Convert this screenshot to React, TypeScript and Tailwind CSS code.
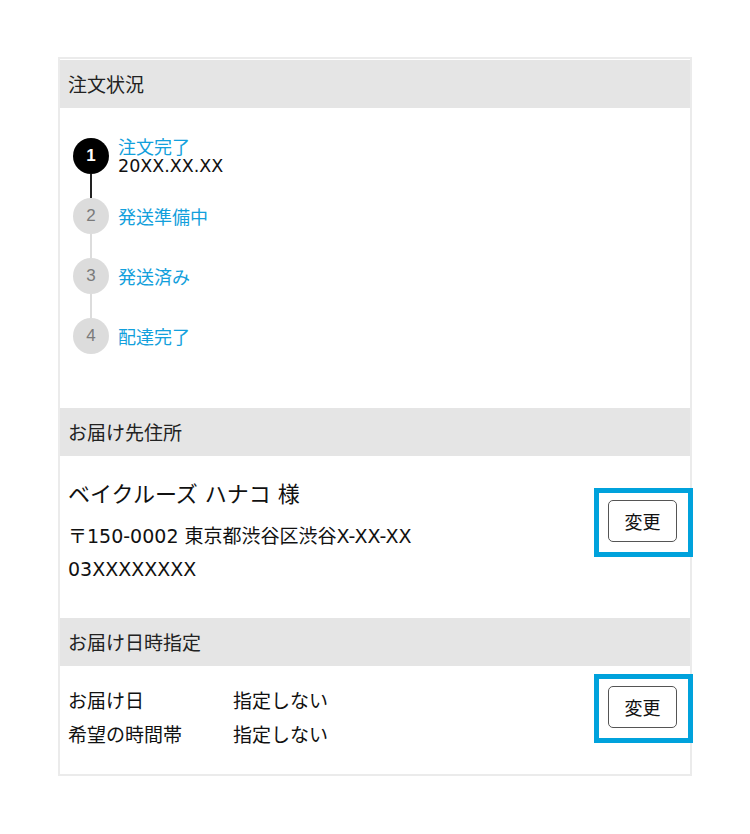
const font = { fontFamily: '"Noto Sans CJK JP", "Noto Sans", sans-serif' }
const latinFont = { fontFamily: '"DejaVu Sans", "Noto Sans CJK JP", sans-serif' }

interface Step {
    num: number
    label: string
    date?: string
    done: boolean
}

const steps: Step[] = [
    { num: 1, label: '注文完了', date: '20XX.XX.XX', done: true },
    { num: 2, label: '発送準備中', done: false },
    { num: 3, label: '発送済み', done: false },
    { num: 4, label: '配達完了', done: false },
]

function SectionHeader({ title }: { title: string }) {
    return (
        <div className="flex h-[48px] items-center bg-[#e5e5e5] pl-[8px] text-[19px] text-[#222]">
            {title}
        </div>
    )
}

function ChangeButton() {
    return (
        <div className="-mr-[3px] border-[5px] border-[#00a2dc] pt-[7px] pr-[11px] pb-[10px] pl-[9px]">
            <button className="flex h-[42px] w-[69px] items-center justify-center rounded-[5px] border-[1.5px] border-[#555] bg-white text-[18px] text-[#111]">
                変更
            </button>
        </div>
    )
}

function StepList() {
    return (
        <div className="pt-[30px] pb-[54px] pl-[13px]">
            {steps.map((step, i) => (
                <div key={step.num} className="flex items-start">
                    <div className="flex w-[36px] flex-col items-center">
                        <div
                            className={
                                step.done
                                    ? 'flex h-[36px] w-[36px] items-center justify-center rounded-full bg-black text-[17px] font-bold text-white'
                                    : 'flex h-[36px] w-[36px] items-center justify-center rounded-full bg-[#dcdcdc] text-[17px] text-[#7a7a7a]'
                            }
                            style={{ fontFamily: '"Liberation Sans", Arial, sans-serif' }}
                        >
                            {step.num}
                        </div>
                        {i < steps.length - 1 && (
                            <div
                                className={
                                    step.done
                                        ? 'h-[24px] w-[2px] bg-[#222]'
                                        : 'h-[24px] w-[2px] bg-[#dcdcdc]'
                                }
                            />
                        )}
                    </div>
                    <div className="ml-[9px] flex h-[36px] flex-col justify-center">
                        <div className="text-[18px] leading-[20px] text-[#12a0dc]">{step.label}</div>
                        {step.date && (
                            <div className="text-[17.5px] leading-[20px] text-[#111]" style={latinFont}>
                                {step.date}
                            </div>
                        )}
                    </div>
                </div>
            ))}
        </div>
    )
}

function App() {
    return (
        <div className="min-h-[834px] w-[750px] bg-white pt-[57px]" style={font}>
            <div className="ml-[58px] w-[634px] border-2 border-[#ebebeb] bg-white pt-px">
                <SectionHeader title="注文状況" />
                <StepList />

                <SectionHeader title="お届け先住所" />
                <div className="flex items-start justify-between pt-[24px] pb-[32px] pl-[8px]" style={latinFont}>
                    <div className="text-[#111]">
                        <div className="text-[22px] leading-[30px]">ベイクルーズ ハナコ 様</div>
                        <div className="mt-[10px] text-[19px] leading-[33px]">〒150-0002 東京都渋谷区渋谷X-XX-XX</div>
                        <div className="text-[19px] leading-[33px]">03XXXXXXXX</div>
                    </div>
                    <div className="mt-[8px]" style={font}>
                        <ChangeButton />
                    </div>
                </div>

                <SectionHeader title="お届け日時指定" />
                <div className="flex items-start justify-between pt-[8px] pb-[23px] pl-[8px]">
                    <div className="mt-[9px] text-[19px] leading-[34px] text-[#111]">
                        <div className="flex">
                            <div className="w-[165px]">お届け日</div>
                            <div>指定しない</div>
                        </div>
                        <div className="flex">
                            <div className="w-[165px]">希望の時間帯</div>
                            <div>指定しない</div>
                        </div>
                    </div>
                    <ChangeButton />
                </div>
            </div>
        </div>
    )
}

export default App
